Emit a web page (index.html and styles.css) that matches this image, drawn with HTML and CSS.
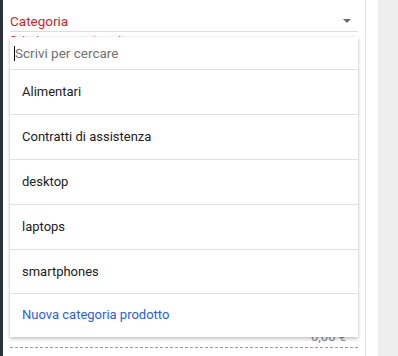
FILE: index.html
```html
<!DOCTYPE html>
<html lang="it">
<head>
    <meta charset="UTF-8">
    <meta name="viewport" content="width=device-width, initial-scale=1.0">
    <title>Categoria</title>
    <link rel="stylesheet" href="styles.css">
</head>
<body>
    <div class="sidebar"></div>
    <div class="panel">
        <div class="field">
            <div class="select">
                <span class="select-label">Categoria</span>
                <span class="select-arrow"></span>
            </div>
            <div class="field-error">Seleziona una categoria</div>

            <div class="dropdown">
                <div class="search">
                    <span class="caret"></span>
                    <input type="text" placeholder="Scrivi per cercare">
                </div>
                <ul class="options">
                    <li>Alimentari</li>
                    <li>Contratti di assistenza</li>
                    <li>desktop</li>
                    <li>laptops</li>
                    <li>smartphones</li>
                </ul>
                <div class="add-new">Nuova categoria prodotto</div>
            </div>
        </div>
        <div class="spacer"></div>
        <div class="total">0,00 €</div>
        <div class="dashed"></div>
    </div>
    <div class="gap"></div>
    <div class="aside"></div>
</body>
</html>
```

FILE: styles.css
```css
body {
    margin: 0;
    height: 356px;
    display: flex;
    font-family: Roboto, "Noto Sans", sans-serif;
    font-size: 13px;
    color: #212121;
    background: #fff;
    overflow: hidden;
}
.sidebar {
    width: 3px;
    background: #2b3238;
}
.panel {
    width: 348px;
    padding: 0 7px;
    border-right: 1px solid #e3e3e3;
    display: flex;
    flex-direction: column;
}
.field {
    position: relative;
    padding-top: 12px;
}
.select {
    display: flex;
    align-items: center;
    justify-content: space-between;
    height: 18px;
    padding-bottom: 1px;
    border-bottom: 1px solid #dcdcdc;
}
.select-label {
    color: #d0262d;
    font-size: 13.5px;
}
.select-arrow {
    width: 0;
    height: 0;
    margin-right: 7px;
    border-left: 4px solid transparent;
    border-right: 4px solid transparent;
    border-top: 4px solid #6b6b6b;
}
.field-error {
    color: #d0262d;
    font-size: 11px;
    padding-top: 2px;
}
.dropdown {
    position: absolute;
    top: 37px;
    left: 0;
    right: 0;
    background: #fff;
    box-shadow: 0 2px 4px rgba(0, 0, 0, 0.22), 0 0 3px rgba(0, 0, 0, 0.08);
    z-index: 2;
}
.search {
    height: 32px;
    border-bottom: 1px solid #e0e0e0;
    display: flex;
    align-items: center;
    padding-left: 4px;
}
.caret {
    width: 1px;
    height: 15px;
    background: #000;
}
.search input {
    border: none;
    outline: none;
    width: 100%;
    padding: 0;
    font-family: inherit;
    font-size: 13.5px;
    color: #212121;
}
.search input::placeholder {
    color: #717171;
}
.options {
    list-style: none;
    margin: 0;
    padding: 0;
    max-height: 223px;
    overflow: hidden;
}
.options li {
    height: 44px;
    line-height: 44px;
    padding-left: 12px;
    border-bottom: 1px solid #e0e0e0;
}
.add-new {
    height: 43px;
    line-height: 42px;
    padding-left: 12px;
    color: #2a62d6;
    border-top: 1px solid #e0e0e0;
}
.spacer {
    flex: 1;
}
.total {
    text-align: right;
    color: #8a8a8a;
    font-size: 13px;
    padding-right: 12px;
    line-height: 16px;
}
.dashed {
    border-top: 1px dashed #9a9a9a;
    margin: 2px 0 8px;
}
.gap {
    width: 12px;
}
.aside {
    flex: 1;
    background: #eeeeee;
}
```
